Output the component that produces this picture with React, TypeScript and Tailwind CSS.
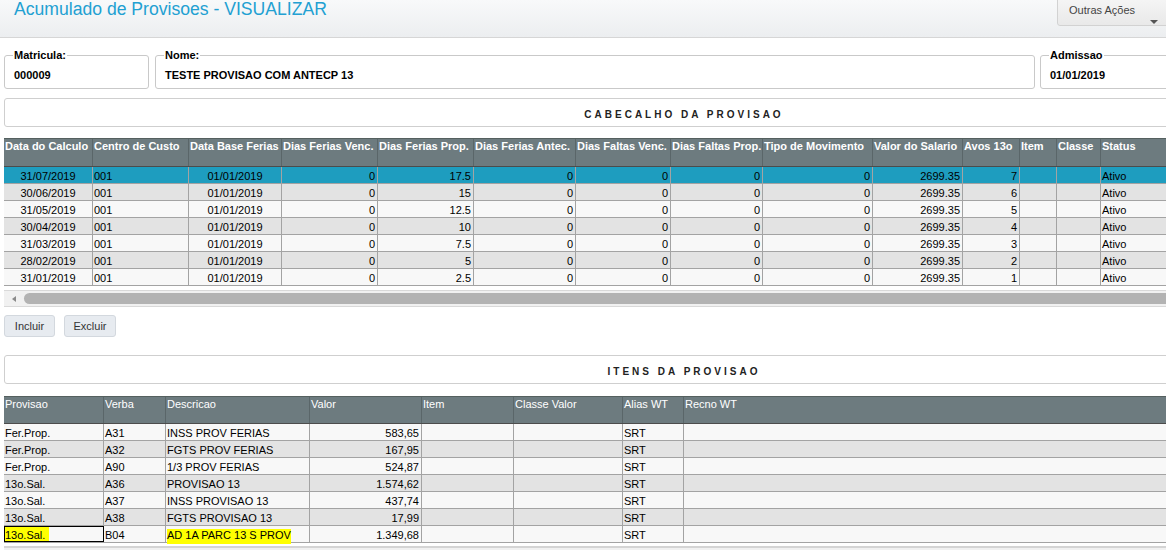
import React from 'react';

type Col = { label: string; w: number; align: 'left' | 'center' | 'right' };

const cabCols: Col[] = [
  { label: 'Data do Calculo', w: 89, align: 'center' },
  { label: 'Centro de Custo', w: 96, align: 'left' },
  { label: 'Data Base Ferias', w: 93, align: 'center' },
  { label: 'Dias Ferias Venc.', w: 96, align: 'right' },
  { label: 'Dias Ferias Prop.', w: 96, align: 'right' },
  { label: 'Dias Ferias Antec.', w: 102, align: 'right' },
  { label: 'Dias Faltas Venc.', w: 95, align: 'right' },
  { label: 'Dias Faltas Prop.', w: 92, align: 'right' },
  { label: 'Tipo de Movimento', w: 110, align: 'right' },
  { label: 'Valor do Salario', w: 90, align: 'right' },
  { label: 'Avos 13o', w: 57, align: 'right' },
  { label: 'Item', w: 37, align: 'left' },
  { label: 'Classe', w: 44, align: 'left' },
  { label: 'Status', w: 79, align: 'left' },
];

const datas = ['31/07/2019', '30/06/2019', '31/05/2019', '30/04/2019', '31/03/2019', '28/02/2019', '31/01/2019'];
const props = ['17.5', '15', '12.5', '10', '7.5', '5', '2.5'];

const cabRows = datas.map((d, i) => [
  d, '001', '01/01/2019', '0', props[i], '0', '0', '0', '0', '2699.35', String(7 - i), '', '', 'Ativo',
]);

const itemCols: Col[] = [
  { label: 'Provisao', w: 100, align: 'left' },
  { label: 'Verba', w: 62, align: 'left' },
  { label: 'Descricao', w: 144, align: 'left' },
  { label: 'Valor', w: 112, align: 'right' },
  { label: 'Item', w: 92, align: 'left' },
  { label: 'Classe Valor', w: 109, align: 'left' },
  { label: 'Alias WT', w: 61, align: 'left' },
  { label: 'Recno WT', w: 500, align: 'left' },
];

const itens = [
  ['Fer.Prop.', 'A31', 'INSS PROV FERIAS', '583,65'],
  ['Fer.Prop.', 'A32', 'FGTS PROV FERIAS', '167,95'],
  ['Fer.Prop.', 'A90', '1/3 PROV FERIAS', '524,87'],
  ['13o.Sal.', 'A36', 'PROVISAO 13', '1.574,62'],
  ['13o.Sal.', 'A37', 'INSS PROVISAO 13', '437,74'],
  ['13o.Sal.', 'A38', 'FGTS PROVISAO 13', '17,99'],
  ['13o.Sal.', 'B04', 'AD 1A PARC 13 S PROV', '1.349,68'],
];

const alignCls = { left: 'text-left pl-[1px]', center: 'text-center', right: 'text-right pr-[2px]' };

function Campo({ label, value, w }: { label: string; value: string; w: string }) {
  return (
    <fieldset className={`${w} shrink-0 border border-[#c9c9c9] rounded-[3px] px-[8px] pb-[6px]`}>
      <legend className="px-[1px] text-[11px] leading-[13px] font-bold text-black">{label}</legend>
      <div className="pt-[7px] pl-[1px] text-[11px] leading-[13px] font-bold text-black">{value}</div>
    </fieldset>
  );
}

function Secao({ title }: { title: string }) {
  return (
    <div className="w-[1360px] h-[29px] border border-[#cfcfcf] rounded-[3px] flex items-center justify-center pt-[3px]">
      <span className="text-[10px] font-bold tracking-[3px] text-[#222]">{title}</span>
    </div>
  );
}

export default function App() {
  return (
    <div className="w-[1166px] h-[550px] overflow-hidden bg-white font-['Liberation_Sans',Arial,sans-serif] text-black">
      {/* barra superior */}
      <div className="w-[1172px] h-[38px] border-b border-[#d6d6d6] bg-gradient-to-b from-[#f8f9fa] to-[#eceef0] flex justify-between">
        <h1 className="pl-[14px] -mt-[2px] text-[17.6px] leading-[22px] text-[#22a0d2]">
          Acumulado de Provisoes - VISUALIZAR
        </h1>
        <button className="relative w-[115px] h-[33px] -mt-[7px] border border-[#d2d2d2] rounded-[3px] bg-gradient-to-b from-[#f7f7f7] to-[#e9e9e9] text-left">
          <span className="absolute left-[11px] top-[10px] text-[11px] leading-[13px] text-[#444]">Outras Ações</span>
          <span className="absolute right-[13px] top-[26px] w-0 h-0 border-l-[4px] border-r-[4px] border-t-[4px] border-l-transparent border-r-transparent border-t-[#555]" />
        </button>
      </div>

      <div className="pl-[4px]">
        {/* campos */}
        <div className="mt-[11px] flex gap-[6px] w-[1200px]">
          <Campo label="Matricula:" value="000009" w="w-[145px]" />
          <Campo label="Nome:" value="TESTE PROVISAO COM ANTECP 13" w="w-[880px]" />
          <div className="-ml-[1px]">
            <Campo label="Admissao" value="01/01/2019" w="w-[150px]" />
          </div>
        </div>

        <div className="mt-[9px]">
          <Secao title="CABECALHO DA PROVISAO" />
        </div>

        {/* grade cabecalho */}
        <div className="mt-[11px] w-[1176px] text-[11px] leading-[13px]">
          <div className="grid grid-cols-[89px_96px_93px_96px_96px_102px_95px_92px_110px_90px_57px_37px_44px_79px] h-[29px] bg-[#6d7b7f] border-t border-[#55605f] border-b border-b-[#4c4c4c]">
            {cabCols.map((c) => (
              <div key={c.label} className="border-r border-[#5a6669] pl-[1px] pt-[1px] font-bold text-white whitespace-nowrap overflow-hidden">
                {c.label}
              </div>
            ))}
          </div>
          {cabRows.map((r, i) => (
            <div
              key={i}
              className={`grid grid-cols-[89px_96px_93px_96px_96px_102px_95px_92px_110px_90px_57px_37px_44px_79px] h-[17px] border-b border-[#a3a3a3] ${
                i === 0 ? 'bg-[#1e9dbf]' : i % 2 === 1 ? 'bg-[#e3e3e3]' : 'bg-[#f8f8f8]'
              }`}
            >
              {r.map((v, j) => (
                <div key={j} className={`border-r border-[#a3a3a3] pt-[3px] whitespace-nowrap overflow-hidden ${alignCls[cabCols[j].align]}`}>
                  {v}
                </div>
              ))}
            </div>
          ))}
        </div>

        {/* barra de rolagem */}
        <div className="mt-[4px] w-[1170px] h-[17px] border-t border-b border-[#d9d9d9] bg-[#f1f1f1] flex items-center">
          <span className="ml-[8px] w-0 h-0 border-t-[3px] border-b-[3px] border-r-[4px] border-t-transparent border-b-transparent border-r-[#8a8a8a]" />
          <div className="ml-[8px] flex-1 h-[11px] rounded-l-full bg-[#b3b3b3]" />
        </div>

        {/* botoes */}
        <div className="mt-[8px] flex gap-[9px]">
          <button className="w-[51px] h-[22px] border border-[#d3d8de] rounded-[3px] bg-[#e7ebf0] text-[11px] text-[#333]">Incluir</button>
          <button className="w-[52px] h-[22px] border border-[#d3d8de] rounded-[3px] bg-[#e7ebf0] text-[11px] text-[#333]">Excluir</button>
        </div>

        <div className="mt-[18px]">
          <Secao title="ITENS DA PROVISAO" />
        </div>

        {/* grade itens */}
        <div className="mt-[12px] w-[1180px] text-[11px] leading-[13px]">
          <div className="grid grid-cols-[100px_62px_144px_112px_92px_109px_61px_500px] h-[28px] bg-[#6d7b7f] border-t border-[#55605f] border-b border-b-[#4c4c4c]">
            {itemCols.map((c) => (
              <div key={c.label} className="border-r border-[#5a6669] pl-[1px] pt-[1px] text-white whitespace-nowrap overflow-hidden">
                {c.label}
              </div>
            ))}
          </div>
          {itens.map((r, i) => {
            const last = i === itens.length - 1;
            return (
              <div
                key={i}
                className={`grid grid-cols-[100px_62px_144px_112px_92px_109px_61px_500px] h-[17px] border-b border-[#a3a3a3] ${
                  i % 2 === 1 ? 'bg-[#e3e3e3]' : 'bg-[#f8f8f8]'
                }`}
              >
                <div className={`border-r whitespace-nowrap overflow-hidden ${last ? 'border border-black pt-[2px]' : 'border-[#a3a3a3] pt-[3px] pl-[1px]'}`}>
                  {last ? <span className="bg-[#ffff00] pr-[4px] inline-block h-[15px] -mt-[2px] pt-[2px]">{r[0]}</span> : r[0]}
                </div>
                <div className="border-r border-[#a3a3a3] pt-[3px] pl-[1px]">{r[1]}</div>
                <div className="border-r border-[#a3a3a3] pt-[3px] pl-[1px] whitespace-nowrap">
                  {last ? <span className="bg-[#ffff00] pb-[3px]">{r[2]}</span> : r[2]}
                </div>
                <div className="border-r border-[#a3a3a3] pt-[3px] pr-[2px] text-right">{r[3]}</div>
                <div className="border-r border-[#a3a3a3]" />
                <div className="border-r border-[#a3a3a3]" />
                <div className="border-r border-[#a3a3a3] pt-[3px] pl-[1px]">SRT</div>
                <div />
              </div>
            );
          })}
        </div>
        <div className="mt-[3px] w-[1170px] h-[10px] border-t-2 border-[#d4d4d4] bg-[#f1f1f1]" />
      </div>
    </div>
  );
}
